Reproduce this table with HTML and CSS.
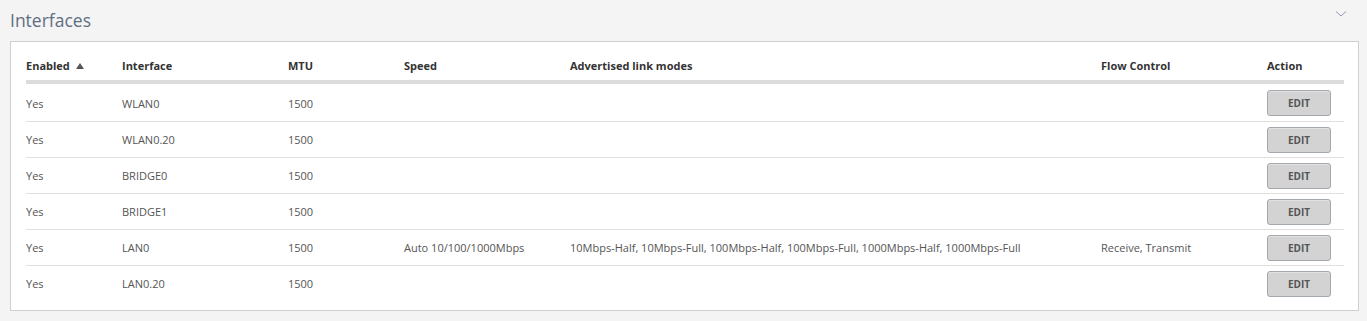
FILE: index.html
```html
<!DOCTYPE html>
<html>
<head>
<meta charset="utf-8">
<link rel="stylesheet" href="styles.css">
</head>
<body>
<div class="section">
  <div class="section-head">
    <h2 class="title">Interfaces</h2>
    <svg class="chevron" width="12" height="8" viewBox="0 0 12 8"><path d="M1 1.5 L6 6 L11 1.5" fill="none" stroke="#8f9aad" stroke-width="1"/></svg>
  </div>
  <div class="panel">
    <table class="grid">
      <colgroup>
        <col class="c1"><col class="c2"><col class="c3"><col class="c4"><col class="c5"><col class="c6"><col class="c7">
      </colgroup>
      <thead>
        <tr>
          <th>Enabled <span class="sort"></span></th>
          <th>Interface</th>
          <th>MTU</th>
          <th>Speed</th>
          <th>Advertised link modes</th>
          <th>Flow Control</th>
          <th>Action</th>
        </tr>
      </thead>
      <tbody>
        <tr><td>Yes</td><td>WLAN0</td><td>1500</td><td></td><td></td><td></td><td><button class="btn">EDIT</button></td></tr>
        <tr><td>Yes</td><td>WLAN0.20</td><td>1500</td><td></td><td></td><td></td><td><button class="btn">EDIT</button></td></tr>
        <tr><td>Yes</td><td>BRIDGE0</td><td>1500</td><td></td><td></td><td></td><td><button class="btn">EDIT</button></td></tr>
        <tr><td>Yes</td><td>BRIDGE1</td><td>1500</td><td></td><td></td><td></td><td><button class="btn">EDIT</button></td></tr>
        <tr><td>Yes</td><td>LAN0</td><td>1500</td><td>Auto 10/100/1000Mbps</td><td>10Mbps-Half, 10Mbps-Full, 100Mbps-Half, 100Mbps-Full, 1000Mbps-Half, 1000Mbps-Full</td><td>Receive, Transmit</td><td><button class="btn">EDIT</button></td></tr>
        <tr><td>Yes</td><td>LAN0.20</td><td>1500</td><td></td><td></td><td></td><td><button class="btn">EDIT</button></td></tr>
      </tbody>
    </table>
  </div>
</div>
</body>
</html>
```
FILE: styles.css
```css
html, body {
  margin: 0;
  padding: 0;
  background: #f4f4f4;
}
body {
  font-family: "Open Sans", "Liberation Sans", sans-serif;
  color: #555;
}
.section {
  padding: 0 8px 0 10px;
}
.section-head {
  display: flex;
  justify-content: space-between;
  align-items: flex-start;
  height: 41px;
}
.title {
  margin: 0;
  padding-top: 7px;
  font-size: 17.5px;
  font-weight: 400;
  line-height: 26px;
  color: #5f6e82;
}
.chevron {
  margin-top: 10px;
  margin-right: 12px;
}
.panel {
  background: #fff;
  border: 1px solid #cfcfcf;
  padding: 15px 14px 9px 15px;
}
.grid {
  width: 100%;
  border-collapse: collapse;
  table-layout: fixed;
  font-size: 11px;
}
.c1 { width: 96px; }
.c2 { width: 166px; }
.c3 { width: 116px; }
.c4 { width: 166px; }
.c5 { width: 531px; }
.c6 { width: 166px; }
.c7 { width: auto; }
.grid th {
  text-align: left;
  font-weight: 700;
  color: #333;
  line-height: 15px;
  padding: 1px 0 7px 0;
  border-bottom: 4px solid #dcdcdc;
  white-space: nowrap;
}
.sort {
  display: inline-block;
  width: 0;
  height: 0;
  margin-left: 3px;
  border-left: 4px solid transparent;
  border-right: 4px solid transparent;
  border-bottom: 6px solid #555;
  vertical-align: 1px;
}
.grid td {
  height: 35px;
  padding: 0;
  line-height: 15px;
  border-bottom: 1px solid #e0e0e0;
  vertical-align: middle;
  white-space: nowrap;
  color: #555;
}
.grid tbody tr:first-child td {
  height: 36px;
  padding-top: 1px;
}
.grid tbody tr:last-child td {
  border-bottom: none;
}
.btn {
  display: block;
  width: 64px;
  height: 26px;
  padding: 0;
  background: #d3d3d3;
  border: 1px solid #a3a7ae;
  border-radius: 3px;
  font-family: "Open Sans", "Liberation Sans", sans-serif;
  font-size: 10px;
  font-weight: 700;
  color: #555;
  box-shadow: inset 0 1px 0 #e2e2e2;
}
```
